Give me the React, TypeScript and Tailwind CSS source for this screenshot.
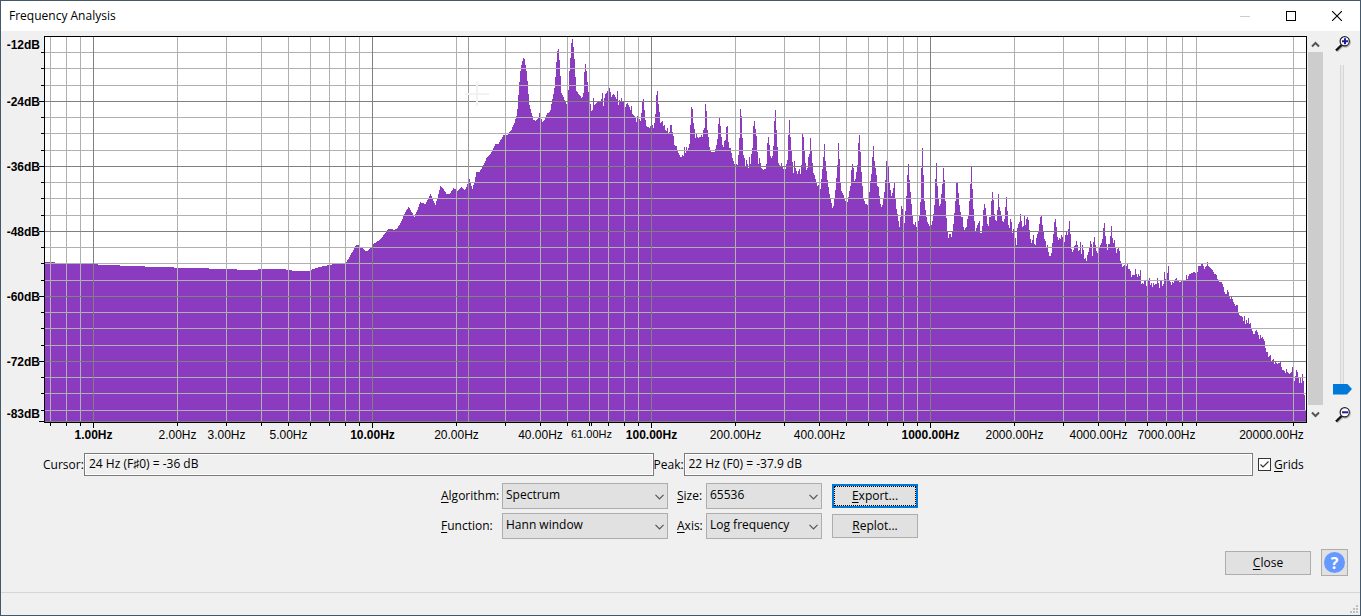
import type { ReactNode } from 'react'

type Band = { x: number; y: number; trace: string }

// Each band is "x,y" pairs in thirds of a pixel, relative to the band origin
const BANDS: Band[] = [
  {
    x: 0,
    y: 0,
    trace:
      '135,786 165,786 166,791 293,792 294,795 360,795 361,798 435,798 436,801 522,801 523,804 627,804 628,807 711,807 712,810 774,810 775,807 858,807 859,810 876,810 877,813 927,813 930,810 942,807 960,801 975,798 990,795 1018,790',
  },
  {
    x: 340,
    y: 30,
    trace:
      '15,699 20,695 30,678 40,660 46,648 52,645 58,648 66,654 74,663 82,663 92,654 100,642 120,630 132,614 145,597 156,597 160,600 170,598 185,572 196,545 206,531 214,546 223,560 232,540 240,517 256,522 266,505 271,492 277,507 286,525 295,492 301,468 310,478 320,494 330,492 340,474 352,482 364,470 374,483 380,468 388,447 397,477 403,455 409,427 418,425 428,411 440,383 450,375 466,343 476,341 490,315 502,315 514,300 524,276 531,250 535,195 540,130 545,100 549,84 553,88 559,122 563,165 567,222 573,245 580,270 588,273 594,265 598,249 602,260 606,276 612,272 620,252 630,245 636,213 643,175 647,130 650,80 653,54 656,60 660,120 664,190 672,207 680,225 684,205 687,135 691,85 694,40 697,27 700,50 704,100 708,182 718,195 726,207 730,190 733,125 736,102 740,130 744,180 747,200 751,222 753,245 757,240 760,205 763,225 770,218 775,215 782,218 787,190 790,228 794,195 800,188 808,174 812,190 815,205 818,190 824,195 829,208 832,183 835,225 839,205 842,220 844,205 848,222 852,210 857,237 860,215 866,228 871,240 874,228 877,252 885,260 889,276 893,252 899,272 902,276 905,237 908,204 911,210 914,255 918,288 928,294 932,285 937,285 940,294 944,276 947,240 950,174 953,190 956,240 959,248 961,279 967,273 971,294 974,282 977,310 982,294 986,318 989,300 992,276 995,290 998,315 1001,318 1004,357 1007,345 1010,352 1013,366 1016,372 1020,381',
  },
  {
    x: 660,
    y: 60,
    trace:
      '64,292 67,286 70,288 73,262 76,278 79,262 83,272 88,253 91,196 94,141 97,147 100,190 103,208 106,234 109,222 112,232 116,234 121,231 124,225 128,234 130,210 133,204 136,132 139,153 142,210 145,232 148,261 153,276 163,276 168,262 172,237 175,192 178,174 181,198 184,232 187,255 190,261 193,243 196,240 199,202 202,198 205,246 208,264 211,264 216,290 223,312 232,314 235,285 238,235 241,147 244,168 247,234 250,285 253,294 256,318 259,300 265,324 268,291 271,312 274,282 277,264 280,198 283,183 286,207 289,228 292,276 295,312 298,294 303,322 310,329 317,326 320,306 322,249 325,231 328,255 331,288 334,294 338,286 340,258 343,183 346,150 349,210 352,261 355,309 360,320 364,309 370,327 376,327 382,300 385,225 388,180 391,231 394,272 397,306 400,339 403,303 406,324 412,342 418,327 421,342 425,306 427,222 430,231 433,273 436,310 439,330 442,324 445,291 448,282 451,234 454,273 457,309 460,339 463,346 468,366 472,378 475,375 481,387 484,357 487,327 490,291 493,252 496,303 499,333 503,370 508,402 514,429 517,444 520,438 526,390 529,354 532,315 535,249 538,297 541,368 544,393 550,406 556,423 563,426 568,393 571,378 574,330 577,312 580,324 583,363 586,357 589,336 592,315 595,249 598,225 601,276 604,336 607,378 610,415 616,432 623,436 628,396 631,363 634,342 637,291 640,258 643,303 646,324 649,345 652,378 655,381 658,408 661,432 664,441 667,435 673,396 676,360 679,303 682,321 685,321 688,369 691,390 694,408 698,396 703,369 706,415 709,447 712,462 715,483 718,501 721,471 724,438 727,447 730,480 733,489 736,453 739,408 742,345 745,312 748,360 751,396 754,432 757,465 760,492 764,498 766,486 769,501 775,483 778,465 781,426 784,324 787,264 790,345 793,423 796,450 799,471 802,486 808,498 814,495 817,483 820,462 823,435 826,357 829,309 832,378 835,415 838,438 841,432 844,402 847,372 850,324 853,360 856,423 859,474 862,515 865,534 868,522 872,522 875,534 880,492 883,459 886,423 889,369 892,369 895,399 898,435 901,456 904,471 907,471 910,501 913,510 919,501 922,477 925,465 928,423 931,372 934,321 937,387 940,447 943,483 946,515 952,495 958,483 961,519 964,519 967,498 970,450 973,432 976,444 979,465 982,492 985,498 988,471 991,471 994,423 997,396 1000,420 1003,462 1006,480 1009,483 1012,450 1015,402 1018,441',
  },
  {
    x: 980,
    y: 130,
    trace:
      '61,243 64,258 67,273 70,276 73,267 76,231 79,201 82,243 85,285 88,294 91,267 94,276 97,309 100,297 103,300 106,324 109,345 112,294 115,282 118,276 121,252 124,273 127,291 130,288 133,258 136,285 139,267 142,261 145,270 148,300 151,327 154,339 157,330 160,315 163,342 166,345 169,324 172,312 175,306 178,282 181,261 184,258 187,285 190,303 193,327 196,333 199,351 202,345 205,366 208,378 211,378 214,369 217,339 220,312 223,276 226,267 229,291 232,321 235,330 238,324 241,327 244,315 247,321 250,321 253,336 256,315 259,306 262,315 265,297 268,273 271,312 274,357 277,366 280,360 283,348 286,345 289,333 292,345 295,363 298,360 301,336 304,372 307,345 310,360 313,387 316,384 319,393 322,375 325,366 328,351 331,333 334,342 337,378 340,336 343,321 346,345 349,363 352,369 358,351 361,345 364,339 367,327 370,294 373,279 376,318 379,342 382,360 385,342 388,342 391,318 394,288 397,324 400,339 403,330 406,351 409,369 412,357 415,353 418,363 421,393 424,402 427,411 433,405 439,408 442,402 445,417 448,417 451,423 454,441 457,435 463,435 466,417 469,432 472,441 475,432 478,438 481,420 484,462 487,459 490,462 493,453 496,453 499,468 502,452 505,453 508,444 511,465 514,459 517,471 520,459 523,465 529,462 532,444 535,459 538,474 541,453 544,453 547,468 550,462 553,426 556,447 559,450 562,429 565,408 568,453 571,456 574,465 577,456 580,459 583,453 589,444 592,453 600,456 604,453 616,450 619,435 622,447 628,432 637,429 643,426 646,429 652,426 655,408 661,408 664,402 667,402 673,417 679,408 682,396 685,408 691,414 697,420 703,432 709,435 712,447 718,456 724,456 730,471 733,486 736,492 739,492 742,480 745,486 748,500 751,507 754,501 760,516 766,528 772,525 775,549 778,555 787,561 790,573 793,558 796,582 799,570 802,579 805,564 808,582 811,579 814,597 820,612 823,612 826,603 829,600 835,615 838,627 841,615 844,624 847,621 853,633 856,654 859,666 862,666 865,681 871,675 874,693 880,687 883,702 886,696 892,702 901,696 904,711 907,720 913,723 916,729 919,717 922,726 928,732 934,726 937,711 940,730 943,753 946,738 949,720 952,726 955,744 958,759 961,741 964,759 967,732 970,753 973,795 976,838',
  },
]

const PLOT_W = 1263
const PLOT_H = 387
const LEFT = 44
const TOP = 36

const samples = BANDS.flatMap((band) =>
  band.trace.split(' ').map((pair) => {
    const [x, y] = pair.split(',').map(Number)
    return [band.x + x / 3 - LEFT, band.y + y / 3 - TOP]
  }),
)

// One column per pixel, so the outline is stepped rather than sloped
function spectrumPath() {
  let d = `M1 ${PLOT_H - 1}`
  let i = 0
  for (let x = 1; x < PLOT_W - 2; x++) {
    const c = x + 1 / 3
    while (i < samples.length - 2 && samples[i + 1][0] < c) i++
    const [x0, y0] = samples[i]
    const [x1, y1] = samples[i + 1]
    const t = Math.min(1, Math.max(0, (c - x0) / (x1 - x0)))
    d += `V${Math.floor(y0 + (y1 - y0) * t + 0.35)}H${x + 1}`
  }
  return d + `V374H${PLOT_W - 1}V${PLOT_H - 1}Z`
}

const PATH = spectrumPath()

const H_MINOR = [52, 68, 85, 117, 133, 150, 182, 198, 215, 247, 263, 280, 312, 328, 345, 377, 393, 410].map((y) => y - TOP)
const H_MAJOR = [101, 166, 231, 296, 361, 421].map((y) => y - TOP)
const V_MINOR = [
  50, 66, 80, 177, 226, 261, 288, 310, 329, 345, 359, 456, 505, 540, 567, 589, 608, 624, 638, 735, 784, 819, 846, 868,
  887, 903, 917, 1014, 1063, 1098, 1125, 1147, 1166, 1182, 1196, 1293,
].map((x) => x - LEFT)
const V_MAJOR = [93, 372, 651, 930].map((x) => x - LEFT)

const DB_LABELS = [
  { text: '-12dB', y: 13 },
  { text: '-24dB', y: 70 },
  { text: '-36dB', y: 135 },
  { text: '-48dB', y: 200 },
  { text: '-60dB', y: 265 },
  { text: '-72dB', y: 330 },
  { text: '-83dB', y: 382 },
]

const HZ_LABELS = [
  { text: '1.00Hz', x: 93, bold: true },
  { text: '2.00Hz', x: 177 },
  { text: '3.00Hz', x: 226 },
  { text: '5.00Hz', x: 288 },
  { text: '10.00Hz', x: 372, bold: true },
  { text: '20.00Hz', x: 456 },
  { text: '40.00Hz', x: 540 },
  { text: '61.00Hz', x: 591, small: true },
  { text: '100.00Hz', x: 651, bold: true },
  { text: '200.00Hz', x: 735 },
  { text: '400.00Hz', x: 819 },
  { text: '1000.00Hz', x: 930, bold: true },
  { text: '2000.00Hz', x: 1014 },
  { text: '4000.00Hz', x: 1098 },
  { text: '7000.00Hz', x: 1166 },
  { text: '20000.00Hz', x: 1271 },
]

const pct = (x: number) => `${((x + 0.5) / PLOT_W) * 100}%`

const Spectrum = () => (
  <svg
    viewBox={`0 0 ${PLOT_W} ${PLOT_H}`}
    preserveAspectRatio="none"
    shapeRendering="crispEdges"
    className="block h-[387px] w-full"
    role="img"
    aria-label="Spectrum"
  >
    <rect width={PLOT_W} height={PLOT_H} fill="#fff" />
    <path d={PATH} fill="#8b3bbf" />
    {H_MINOR.map((y) => (
      <rect key={y} x={1} y={y} width={PLOT_W - 2} height={1} fill="#b0b0b0" />
    ))}
    {V_MINOR.map((x) => (
      <rect key={x} x={x} y={1} width={1} height={PLOT_H - 2} fill="#b0b0b0" />
    ))}
    {H_MAJOR.map((y) => (
      <rect key={y} x={1} y={y} width={PLOT_W - 2} height={1} fill="#808080" />
    ))}
    {V_MAJOR.map((x) => (
      <rect key={x} x={x} y={1} width={1} height={PLOT_H - 2} fill="#808080" />
    ))}
    {/* peak marker and cursor cross */}
    <rect x={424} y={1} width={1} height={PLOT_H - 2} fill="#9a9a9a" />
    <path d="M421 57h24v2h-24zM432 46h2v24h-2z" fill="#f2f2f2" />
    <path d={`M0 0H${PLOT_W}V${PLOT_H}H0ZM1 1V${PLOT_H - 1}H${PLOT_W - 1}V1Z`} fill="#000" fillRule="evenodd" />
  </svg>
)

const DbRuler = () => (
  <svg className="block h-[387px] w-[43px] shrink-0" aria-hidden="true">
    {H_MINOR.map((y) => (
      <rect key={y} x={40} y={y} width={3} height={1} />
    ))}
    {H_MAJOR.map((y) => (
      <rect key={y} x={38} y={y} width={5} height={1} />
    ))}
    {DB_LABELS.map((l) => (
      <text key={l.text} x={39} y={l.y} textAnchor="end" className="font-['Liberation_Sans',sans-serif] text-[12px] font-bold">
        {l.text}
      </text>
    ))}
  </svg>
)

const HzRuler = () => (
  <svg className="block h-6 w-full overflow-visible" shapeRendering="crispEdges">
    {V_MINOR.concat(591 - LEFT).map((x) => (
      <line key={x} x1={pct(x)} x2={pct(x)} y1={0} y2={3} stroke="#000" />
    ))}
    {V_MAJOR.map((x) => (
      <line key={x} x1={pct(x)} x2={pct(x)} y1={0} y2={5} stroke="#000" />
    ))}
    {HZ_LABELS.map((l) => (
      <text
        key={l.text}
        x={pct(l.x - LEFT)}
        y={l.small ? 15 : 16}
        textAnchor="middle"
        className={`font-['Liberation_Sans',sans-serif] ${l.small ? 'text-[11px]' : 'text-[12px]'} ${l.bold ? 'font-bold' : ''}`}
      >
        {l.text}
      </text>
    ))}
  </svg>
)

const Magnifier = ({ plus }: { plus?: boolean }) => (
  <svg width="16" height="16" viewBox="0 0 16 16" aria-hidden="true">
    <path d="M2 15.5 8 10" stroke="#b8b8b8" strokeWidth="2" />
    <circle cx="10.5" cy="6.3" r="4.7" fill="none" stroke="#b0b0b0" strokeWidth="1.4" />
    <path d="M1 14.5 6.6 9" stroke="#111" strokeWidth="2.4" />
    <circle cx="9.7" cy="5.3" r="4.6" fill="#fff" stroke="#222" strokeWidth="1.2" />
    <path d={plus ? 'M7 4.3h2v-2h2v2h2v2h-2v2H9v-2H7z' : 'M7 4.3h6v2H7z'} fill="#1a1aa6" />
  </svg>
)

const Chevron = ({ up }: { up?: boolean }) => (
  <svg width="9" height="7" viewBox="0 0 9 7" fill="none" stroke="#555" strokeWidth="2" aria-hidden="true">
    <path d={up ? 'M1 5.5 4.5 2 8 5.5' : 'M1 1.5 4.5 5 8 1.5'} />
  </svg>
)

const Combo = ({ id, value }: { id: string; value: string }) => (
  <div className="relative h-[26px]">
    <select
      id={id}
      className="h-full w-full appearance-none border border-[#adadad] bg-[#e1e1e1] pb-[3px] pl-[3px] outline-none"
    >
      <option>{value}</option>
    </select>
    <svg
      className="pointer-events-none absolute top-[11px] right-1"
      width="9"
      height="6"
      viewBox="0 0 9 6"
      fill="none"
      stroke="#555"
      aria-hidden="true"
    >
      <path d="M.5.8 4.5 4.8 8.5.8" strokeWidth="1.2" />
    </svg>
  </div>
)

const Key = ({ children }: { children: ReactNode }) => <span className="underline underline-offset-2">{children}</span>

export default function App() {
  return (
    <div className="flex min-h-screen flex-col border border-[#44586b] bg-[#f0f0f0] font-['Open_Sans','Noto_Sans',sans-serif] text-[12px] leading-4 text-black">
      <header className="flex h-[30px] items-stretch bg-white pl-2">
        <h1 className="flex-1 self-center">Frequency Analysis</h1>
        <button aria-label="Minimize" className="flex w-[46px] items-center justify-center" disabled>
          <span className="h-px w-[10px] bg-[#ccc]" />
        </button>
        <button aria-label="Maximize" className="flex w-[46px] items-center justify-center">
          <span className="size-[10px] border border-black" />
        </button>
        <button aria-label="Close window" className="flex w-[46px] items-center justify-center">
          <svg width="10" height="10" viewBox="0 0 10 10" stroke="#000" strokeWidth="1.1">
            <path d="M0 0l10 10M10 0 0 10" />
          </svg>
        </button>
      </header>

      <main className="flex flex-1 flex-col pt-[5px]">
        <div className="flex">
          <DbRuler />
          <div className="min-w-0 flex-1">
            <Spectrum />
            <HzRuler />
          </div>
          <div className="ml-px flex h-[387px] w-[15px] flex-col">
            <button aria-label="Scroll up" className="flex h-4 items-center justify-center">
              <Chevron up />
            </button>
            <div className="flex-1 bg-[#cdcdcd]" />
            <button aria-label="Scroll down" className="flex h-[18px] items-center justify-center">
              <Chevron />
            </button>
          </div>
          <div className="flex h-[387px] w-[37px] flex-col items-center justify-between pl-[3px]">
            <Magnifier plus />
            <input
              type="range"
              aria-label="Zoom"
              min={0}
              max={100}
              defaultValue={0}
              className="h-[330px] w-5 appearance-none bg-transparent [direction:rtl] [writing-mode:vertical-lr] [&::-webkit-slider-runnable-track]:h-full [&::-webkit-slider-runnable-track]:w-5 [&::-webkit-slider-runnable-track]:bg-[linear-gradient(to_right,transparent_7px,#d6d6d6_7px,#d6d6d6_8px,#e7eaea_8px,#e7eaea_10px,#d6d6d6_10px,#d6d6d6_11px,transparent_11px)] [&::-webkit-slider-thumb]:h-[11px] [&::-webkit-slider-thumb]:w-[19px] [&::-webkit-slider-thumb]:appearance-none [&::-webkit-slider-thumb]:bg-[#0078d7] [&::-webkit-slider-thumb]:[clip-path:polygon(0_0,14px_0,100%_50%,14px_100%,0_100%)]"
            />
            <Magnifier />
          </div>
        </div>

        <div className="mt-[6px] flex h-[23px] items-stretch pl-[42px]">
          <label htmlFor="cursor" className="w-[41px] shrink-0 self-center whitespace-nowrap">
            Cursor:
          </label>
          <input
            id="cursor"
            readOnly
            defaultValue="24 Hz (F♯0) = -36 dB"
            className="min-w-0 flex-1 border border-[#7a7a7a] bg-[#f0f0f0] pb-px pl-1 inset-ring inset-ring-white outline-none"
          />
          <label htmlFor="peak" className="w-[30px] shrink-0 self-center whitespace-nowrap">
            Peak:
          </label>
          <input
            id="peak"
            readOnly
            defaultValue="22 Hz (F0) = -37.9 dB"
            className="min-w-0 flex-1 border border-[#7a7a7a] bg-[#f0f0f0] pb-px pl-1 inset-ring inset-ring-white outline-none"
          />
          <label className="flex w-[107px] shrink-0 items-center gap-[3px] pl-[5px]">
            <span className="relative size-[13px]">
              <input type="checkbox" defaultChecked className="block size-[13px] appearance-none border border-[#333] bg-white" />
              <svg className="pointer-events-none absolute inset-0" width="13" height="13" viewBox="0 0 13 13" fill="none" stroke="#333">
                <path d="M2.5 6.5 5 9l5.5-5.5" strokeWidth="1.2" />
              </svg>
            </span>
            <span>
              <Key>G</Key>rids
            </span>
          </label>
        </div>

        <div className="mt-[7px] grid grid-cols-[61px_166px_38px_116px_96px] items-center justify-center gap-y-1 pr-[2px]">
          <label htmlFor="algorithm">
            <Key>A</Key>lgorithm:
          </label>
          <Combo id="algorithm" value="Spectrum" />
          <label htmlFor="size" className="pl-[9px]">
            <Key>S</Key>ize:
          </label>
          <Combo id="size" value="65536" />
          <button className="ml-[10px] h-6 border-2 border-[#0078d7] bg-[#e1e1e1]">
            <span className="flex h-full items-center justify-center border border-dotted border-black">
              <span>
                <Key>E</Key>xport...
              </span>
            </span>
          </button>
          <label htmlFor="function">
            <Key>F</Key>unction:
          </label>
          <Combo id="function" value="Hann window" />
          <label htmlFor="axis" className="pl-[9px]">
            <Key>A</Key>xis:
          </label>
          <Combo id="axis" value="Log frequency" />
          <button className="ml-[10px] h-6 border border-[#adadad] bg-[#e1e1e1]">
            <Key>R</Key>eplot...
          </button>
        </div>

        <div className="mt-auto flex items-center justify-end gap-[10px] pt-2 pr-3 pb-4">
          <button className="h-6 w-[86px] border border-[#adadad] bg-[#e1e1e1]">
            <Key>C</Key>lose
          </button>
          <button aria-label="Help" className="flex size-[27px] items-center justify-center border border-[#adadad] bg-[#e1e1e1]">
            <span className="flex size-[21px] items-center justify-center rounded-full bg-[#6699ff] text-[16px] font-bold text-white">?</span>
          </button>
        </div>
      </main>

      <footer className="flex h-[23px] items-end justify-end border-t border-[#d7d7d7] p-px">
        <svg width="9" height="9" viewBox="0 0 9 9" fill="#bfbfbf" aria-hidden="true">
          <path d="M6 0h2v2H6zM3 3h2v2H3zM6 3h2v2H6zM0 6h2v2H0zM3 6h2v2H3zM6 6h2v2H6z" />
        </svg>
      </footer>
    </div>
  )
}
